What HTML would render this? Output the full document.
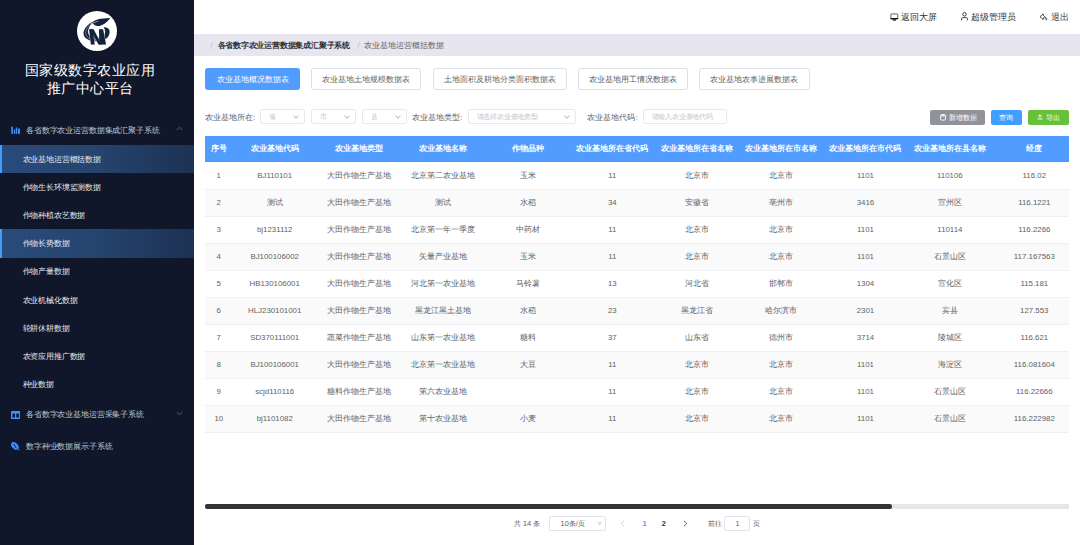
<!DOCTYPE html>
<html><head><meta charset="utf-8">
<style>
*{box-sizing:border-box;margin:0;padding:0}
html,body{width:1080px;height:545px;overflow:hidden;background:#fff;font-family:"Liberation Sans",sans-serif}
.abs{position:absolute}
#side{position:absolute;left:0;top:0;width:194px;height:545px;background:#11172a}
.t{position:absolute;white-space:nowrap;line-height:1}
.logo{position:absolute;left:77px;top:11px;width:40px;height:40px;border-radius:50%;background:#fff}
.title{position:absolute;left:0;width:180px;text-align:center;color:#fff;font-size:14px;letter-spacing:0.5px;line-height:18.7px}
.grp{position:absolute;left:0;width:194px;height:31.5px}
.grp .tx{position:absolute;left:26px;top:1.3px;line-height:31.5px;font-size:8px;color:#bfcbd9;letter-spacing:-0.15px}
.item{position:absolute;left:0;width:194px;height:28.125px}
.item .tx{position:absolute;left:22.5px;top:0.9px;line-height:28.125px;font-size:8px;color:#e6eaf0;letter-spacing:-0.15px}
.item.on{background:linear-gradient(90deg,#2a4a7b 0%,#25446f 50%,#1d3153 100%)}
.item.on:before{content:"";position:absolute;left:0;top:0;width:2px;height:100%;background:#409eff}
#head{position:absolute;left:194px;top:0;width:886px;height:34px;background:#fff}
.hd{position:absolute;top:0.3px;line-height:35px;font-size:9px;color:#303133}
#crumb{position:absolute;left:194px;top:34px;width:886px;height:22px;background:#e7e5f0}
.btn{position:absolute;top:67.5px;height:22px;border:1px solid #dcdfe6;border-radius:2.5px;background:#fff;color:#606266;font-size:8px;line-height:20px;padding-top:1.6px;text-align:center;white-space:nowrap}
.btn.pri{background:#509cff;border-color:#509cff;color:#fff}
.lbl{position:absolute;top:109.5px;line-height:15px;font-size:8px;color:#606266;white-space:nowrap}
.sel{position:absolute;top:109.4px;height:14.8px;border:1px solid #e6e9ef;border-radius:2.2px;background:#fff}
.sel .ph{position:absolute;left:8.2px;top:0;line-height:13px;font-size:7px;color:#c0c4cc;white-space:nowrap;letter-spacing:-0.2px}
.sel .ar{position:absolute;top:4px;width:4px;height:4px;border-right:0.8px solid #c0c4cc;border-bottom:0.8px solid #c0c4cc;transform:rotate(45deg)}
.mb{position:absolute;top:109.8px;height:15.5px;border-radius:2px;color:#fff;font-size:7px;line-height:15.5px;text-align:center;white-space:nowrap}
#table{position:absolute;left:205px;top:135.5px;width:864px;height:297.5px;overflow:hidden}
.row{position:absolute;left:0;width:1200px;height:27px;border-bottom:0.6px solid #eef0f4}
.row.hdr{top:0;height:26.6px;background:#509cff;border:none;box-shadow:inset 0 -0.6px 0 #3f90fb,inset 0 0.6px 0 #4a97fd}
.row.st{background:#fafafa}
.c{position:absolute;top:0;text-align:center;white-space:nowrap;font-size:7.875px;color:#606266}
.hdr .c{color:#fff;font-weight:bold;font-size:8px;line-height:26px}
.row .c{line-height:25.8px}
.pg{top:516.5px;line-height:14.5px;font-size:7.3px;color:#606266}
</style></head><body>
<div id="side">
  <div class="logo"></div>
  <svg class="abs" style="left:82px;top:16px" width="30" height="30" viewBox="0 0 545 545">
    <g fill="#13243a">
      <path d="M185,128 C225,70 330,42 515,38 C475,85 410,165 320,180 C265,190 225,175 185,128 Z"/>
      <path d="M203,100 C110,150 20,230 28,325 C40,435 200,475 340,455 C450,435 515,350 500,262 C494,225 460,205 392,198 C425,255 432,310 398,352 C358,392 248,402 168,377 C112,352 98,292 122,225 C140,180 168,145 212,114 Z"/>
    </g>
    <path d="M160,143 L298,91" stroke="#fff" stroke-width="9" fill="none"/>
    <path d="M196,118 C120,170 62,240 70,325 C80,400 170,440 280,440" stroke="#fff" stroke-width="7" fill="none"/>
    <g fill="#13243a" stroke="#fff" stroke-width="14" stroke-linejoin="miter">
      <path d="M129,242 L196,242 L229,516 L163,516 Z"/>
      <path d="M309,242 L382,242 L436,516 L316,516 Z"/>
      <path d="M136,242 L209,242 L356,516 L303,516 Z"/>
    </g>
    <g fill="#13243a">
      <path d="M129,242 L196,242 L229,516 L163,516 Z"/>
      <path d="M309,242 L382,242 L436,516 L316,516 Z"/>
      <path d="M136,242 L209,242 L356,516 L303,516 Z"/>
    </g>
  </svg>
  <div class="title" style="top:60.5px">国家级数字农业应用</div>
  <div class="title" style="top:79.2px">推广中心平台</div>
  <div class="grp" style="top:113.5px"><div class="tx">各省数字农业运营数据集成汇聚子系统</div>
    <svg class="abs" style="left:11px;top:12px" width="10" height="8" viewBox="0 0 10 8"><g fill="#3b8cff"><rect x="0.2" y="0.7" width="1.7" height="7.2"/><rect x="2.8" y="3.5" width="1.4" height="4.4"/><rect x="4.8" y="1.5" width="1.5" height="6.4"/><rect x="7" y="2.6" width="2" height="5.3"/></g></svg>
    <svg class="abs" style="left:176px;top:12.5px" width="7" height="5" viewBox="0 0 7 5"><path d="M0.8,4 L3.5,1.2 L6.2,4" fill="none" stroke="#5a6478" stroke-width="0.9"/></svg>
  </div>
  <div class="item on" style="top:145px"><div class="tx">农业基地运营概括数据</div></div>
  <div class="item" style="top:173.125px"><div class="tx">作物生长环境监测数据</div></div>
  <div class="item" style="top:201.25px"><div class="tx">作物种植农艺数据</div></div>
  <div class="item on" style="top:229.375px"><div class="tx">作物长势数据</div></div>
  <div class="item" style="top:257.5px"><div class="tx">作物产量数据</div></div>
  <div class="item" style="top:285.625px"><div class="tx">农业机械化数据</div></div>
  <div class="item" style="top:313.75px"><div class="tx">轮耕休耕数据</div></div>
  <div class="item" style="top:341.875px"><div class="tx">农资应用推广数据</div></div>
  <div class="item" style="top:370px"><div class="tx">种业数据</div></div>
  <div class="grp" style="top:398.1px"><div class="tx">各省数字农业基地运营采集子系统</div>
    <svg class="abs" style="left:10.9px;top:12.7px" width="9.4" height="8.2" viewBox="0 0 9.4 8.2"><rect x="0" y="0" width="9.4" height="8.2" rx="0.9" fill="#3d8fff"/><rect x="1.5" y="2.6" width="2.5" height="3.9" fill="#11172a"/><rect x="5.3" y="2.6" width="2.6" height="3.9" fill="#11172a"/></svg>
    <svg class="abs" style="left:176px;top:13px" width="7" height="5" viewBox="0 0 7 5"><path d="M0.8,1 L3.5,3.8 L6.2,1" fill="none" stroke="#5a6478" stroke-width="0.9"/></svg>
  </div>
  <div class="grp" style="top:429.6px"><div class="tx">数字种业数据展示子系统</div>
    <svg class="abs" style="left:11px;top:12px" width="10" height="10" viewBox="0 0 10 10"><ellipse cx="3.9" cy="3.9" rx="4.4" ry="2.9" transform="rotate(45 3.9 3.9)" fill="#3d8fff"/><path d="M2.8,1.9 L5.2,6.2" stroke="#11172a" stroke-width="0.9"/><path d="M6.6,6.6 L8.4,8.2" stroke="#3d8fff" stroke-width="1"/></svg>
  </div>
</div>
<div id="head">
  <svg class="abs" style="left:695.5px;top:12.5px" width="9" height="9" viewBox="0 0 9 9"><rect x="0.85" y="0.95" width="6.9" height="4.9" rx="0.5" fill="none" stroke="#303133" stroke-width="0.75"/><rect x="0.5" y="5" width="7.6" height="1.2" fill="#111"/><rect x="2.6" y="6.2" width="3.4" height="1.5" fill="#303133"/></svg>
  <div class="hd" style="left:707px">返回大屏</div>
  <svg class="abs" style="left:766.5px;top:12.3px" width="7" height="9" viewBox="0 0 7 9"><circle cx="3.5" cy="2.3" r="1.75" fill="none" stroke="#303133" stroke-width="0.9"/><path d="M0.6,8.4 L0.6,6.6 Q0.6,5.6 1.6,5.6 L5.4,5.6 Q6.4,5.6 6.4,6.6 L6.4,8.4" fill="none" stroke="#303133" stroke-width="0.9"/></svg>
  <div class="hd" style="left:777px">超级管理员</div>
  <svg class="abs" style="left:845px;top:12.5px" width="9" height="8" viewBox="0 0 9 8"><path d="M4.2,0.9 L1,3.8 L4.2,6.6 L4.2,5 L5.2,4.6 L7.6,6.8 L7.6,5.4 L4.8,2.6 L4.2,2.6 Z" fill="none" stroke="#303133" stroke-width="0.85" stroke-linejoin="round"/></svg>
  <div class="hd" style="left:857px">退出</div>
</div>
<div id="crumb">
  <div class="t" style="left:16.3px;top:0.6px;line-height:22px;font-size:8.6px;color:#c0c4cc">/</div>
  <div class="t" style="left:23.5px;top:0.8px;line-height:22px;font-size:8px;color:#303133;font-weight:bold;letter-spacing:-0.21px">各省数字农业运营数据集成汇聚子系统</div>
  <div class="t" style="left:163.3px;top:0.6px;line-height:22px;font-size:8.6px;color:#c0c4cc">/</div>
  <div class="t" style="left:169.75px;top:0.8px;line-height:22px;font-size:8px;color:#606266">农业基地运营概括数据</div>
</div>
<div class="btn pri" style="left:205px;width:95px">农业基地概况数据表</div>
<div class="btn" style="left:311.25px;width:110px">农业基地土地规模数据表</div>
<div class="btn" style="left:432.5px;width:134px">土地面积及耕地分类面积数据表</div>
<div class="btn" style="left:577.5px;width:110.5px">农业基地用工情况数据表</div>
<div class="btn" style="left:699.25px;width:110.25px">农业基地农事进展数据表</div>

<div class="lbl" style="left:205px">农业基地所在:</div>
<div class="sel" style="left:260.25px;width:45px"><div class="ph">省</div><div class="ar" style="left:33px"></div></div>
<div class="sel" style="left:311.25px;width:45px"><div class="ph">市</div><div class="ar" style="left:33px"></div></div>
<div class="sel" style="left:361.5px;width:45px"><div class="ph">县</div><div class="ar" style="left:33px"></div></div>
<div class="lbl" style="left:412px">农业基地类型:</div>
<div class="sel" style="left:467.5px;width:108px"><div class="ph">请选择农业基地类型</div><div class="ar" style="left:96px"></div></div>
<div class="lbl" style="left:587.25px">农业基地代码:</div>
<div class="sel" style="left:642.5px;width:84px"><div class="ph">请输入农业基地代码</div></div>
<div class="mb" style="left:930.4px;width:54.5px;background:#909399"><svg class="abs" style="left:9.6px;top:4.3px" width="6" height="6.6" viewBox="0 0 6 6.6"><rect x="0.5" y="0.5" width="5" height="5.6" rx="1.2" fill="none" stroke="#fff" stroke-width="0.9"/><rect x="1.3" y="1.2" width="3.4" height="1.3" fill="#fff"/></svg><span class="abs" style="left:18.5px;top:0">新增数据</span></div>
<div class="mb" style="left:990.7px;width:31.2px;background:#409eff">查询</div>
<div class="mb" style="left:1027.8px;width:41px;background:#67c23a"><svg class="abs" style="left:9.2px;top:4.6px" width="6" height="5.5" viewBox="0 0 6 5.5"><path d="M3,4.2 L3,0.8 M1.2,2.4 L3,0.6 L4.8,2.4 M0.3,5 L5.7,5" fill="none" stroke="#fff" stroke-width="0.85"/></svg><span class="abs" style="left:18.2px;top:0">导出</span></div>

<div id="table">
<div class="row hdr"><div class="c" style="left:0.00px;width:27.5px">序号</div><div class="c" style="left:27.50px;width:84.4px">农业基地代码</div><div class="c" style="left:111.90px;width:84.4px">农业基地类型</div><div class="c" style="left:196.30px;width:84.4px">农业基地名称</div><div class="c" style="left:280.70px;width:84.4px">作物品种</div><div class="c" style="left:365.10px;width:84.4px">农业基地所在省代码</div><div class="c" style="left:449.50px;width:84.4px">农业基地所在省名称</div><div class="c" style="left:533.90px;width:84.4px">农业基地所在市名称</div><div class="c" style="left:618.30px;width:84.4px">农业基地所在市代码</div><div class="c" style="left:702.70px;width:84.4px">农业基地所在县名称</div><div class="c" style="left:787.10px;width:84.4px">经度</div></div>
<div class="row" style="top:27.000px"><div class="c" style="left:0.00px;width:27.5px">1</div><div class="c" style="left:27.50px;width:84.4px">BJ110101</div><div class="c" style="left:111.90px;width:84.4px">大田作物生产基地</div><div class="c" style="left:196.30px;width:84.4px">北京第二农业基地</div><div class="c" style="left:280.70px;width:84.4px">玉米</div><div class="c" style="left:365.10px;width:84.4px">11</div><div class="c" style="left:449.50px;width:84.4px">北京市</div><div class="c" style="left:533.90px;width:84.4px">北京市</div><div class="c" style="left:618.30px;width:84.4px">1101</div><div class="c" style="left:702.70px;width:84.4px">110106</div><div class="c" style="left:787.10px;width:84.4px">116.02</div></div>
<div class="row st" style="top:54.000px"><div class="c" style="left:0.00px;width:27.5px">2</div><div class="c" style="left:27.50px;width:84.4px">测试</div><div class="c" style="left:111.90px;width:84.4px">大田作物生产基地</div><div class="c" style="left:196.30px;width:84.4px">测试</div><div class="c" style="left:280.70px;width:84.4px">水稻</div><div class="c" style="left:365.10px;width:84.4px">34</div><div class="c" style="left:449.50px;width:84.4px">安徽省</div><div class="c" style="left:533.90px;width:84.4px">亳州市</div><div class="c" style="left:618.30px;width:84.4px">3416</div><div class="c" style="left:702.70px;width:84.4px">宣州区</div><div class="c" style="left:787.10px;width:84.4px">116.1221</div></div>
<div class="row" style="top:81.000px"><div class="c" style="left:0.00px;width:27.5px">3</div><div class="c" style="left:27.50px;width:84.4px">bj1231112</div><div class="c" style="left:111.90px;width:84.4px">大田作物生产基地</div><div class="c" style="left:196.30px;width:84.4px">北京第一年一季度</div><div class="c" style="left:280.70px;width:84.4px">中药材</div><div class="c" style="left:365.10px;width:84.4px">11</div><div class="c" style="left:449.50px;width:84.4px">北京市</div><div class="c" style="left:533.90px;width:84.4px">北京市</div><div class="c" style="left:618.30px;width:84.4px">1101</div><div class="c" style="left:702.70px;width:84.4px">110114</div><div class="c" style="left:787.10px;width:84.4px">116.2266</div></div>
<div class="row st" style="top:108.000px"><div class="c" style="left:0.00px;width:27.5px">4</div><div class="c" style="left:27.50px;width:84.4px">BJ100106002</div><div class="c" style="left:111.90px;width:84.4px">大田作物生产基地</div><div class="c" style="left:196.30px;width:84.4px">矢量产业基地</div><div class="c" style="left:280.70px;width:84.4px">玉米</div><div class="c" style="left:365.10px;width:84.4px">11</div><div class="c" style="left:449.50px;width:84.4px">北京市</div><div class="c" style="left:533.90px;width:84.4px">北京市</div><div class="c" style="left:618.30px;width:84.4px">1101</div><div class="c" style="left:702.70px;width:84.4px">石景山区</div><div class="c" style="left:787.10px;width:84.4px">117.167563</div></div>
<div class="row" style="top:135.000px"><div class="c" style="left:0.00px;width:27.5px">5</div><div class="c" style="left:27.50px;width:84.4px">HB130106001</div><div class="c" style="left:111.90px;width:84.4px">大田作物生产基地</div><div class="c" style="left:196.30px;width:84.4px">河北第一农业基地</div><div class="c" style="left:280.70px;width:84.4px">马铃薯</div><div class="c" style="left:365.10px;width:84.4px">13</div><div class="c" style="left:449.50px;width:84.4px">河北省</div><div class="c" style="left:533.90px;width:84.4px">邯郸市</div><div class="c" style="left:618.30px;width:84.4px">1304</div><div class="c" style="left:702.70px;width:84.4px">宣化区</div><div class="c" style="left:787.10px;width:84.4px">115.181</div></div>
<div class="row st" style="top:162.000px"><div class="c" style="left:0.00px;width:27.5px">6</div><div class="c" style="left:27.50px;width:84.4px">HLJ230101001</div><div class="c" style="left:111.90px;width:84.4px">大田作物生产基地</div><div class="c" style="left:196.30px;width:84.4px">黑龙江黑土基地</div><div class="c" style="left:280.70px;width:84.4px">水稻</div><div class="c" style="left:365.10px;width:84.4px">23</div><div class="c" style="left:449.50px;width:84.4px">黑龙江省</div><div class="c" style="left:533.90px;width:84.4px">哈尔滨市</div><div class="c" style="left:618.30px;width:84.4px">2301</div><div class="c" style="left:702.70px;width:84.4px">宾县</div><div class="c" style="left:787.10px;width:84.4px">127.553</div></div>
<div class="row" style="top:189.000px"><div class="c" style="left:0.00px;width:27.5px">7</div><div class="c" style="left:27.50px;width:84.4px">SD370111001</div><div class="c" style="left:111.90px;width:84.4px">蔬菜作物生产基地</div><div class="c" style="left:196.30px;width:84.4px">山东第一农业基地</div><div class="c" style="left:280.70px;width:84.4px">糖料</div><div class="c" style="left:365.10px;width:84.4px">37</div><div class="c" style="left:449.50px;width:84.4px">山东省</div><div class="c" style="left:533.90px;width:84.4px">德州市</div><div class="c" style="left:618.30px;width:84.4px">3714</div><div class="c" style="left:702.70px;width:84.4px">陵城区</div><div class="c" style="left:787.10px;width:84.4px">116.621</div></div>
<div class="row st" style="top:216.000px"><div class="c" style="left:0.00px;width:27.5px">8</div><div class="c" style="left:27.50px;width:84.4px">BJ100106001</div><div class="c" style="left:111.90px;width:84.4px">大田作物生产基地</div><div class="c" style="left:196.30px;width:84.4px">北京第一农业基地</div><div class="c" style="left:280.70px;width:84.4px">大豆</div><div class="c" style="left:365.10px;width:84.4px">11</div><div class="c" style="left:449.50px;width:84.4px">北京市</div><div class="c" style="left:533.90px;width:84.4px">北京市</div><div class="c" style="left:618.30px;width:84.4px">1101</div><div class="c" style="left:702.70px;width:84.4px">海淀区</div><div class="c" style="left:787.10px;width:84.4px">116.081604</div></div>
<div class="row" style="top:243.000px"><div class="c" style="left:0.00px;width:27.5px">9</div><div class="c" style="left:27.50px;width:84.4px">scjd110116</div><div class="c" style="left:111.90px;width:84.4px">糖料作物生产基地</div><div class="c" style="left:196.30px;width:84.4px">第六农业基地</div><div class="c" style="left:280.70px;width:84.4px"></div><div class="c" style="left:365.10px;width:84.4px">11</div><div class="c" style="left:449.50px;width:84.4px">北京市</div><div class="c" style="left:533.90px;width:84.4px">北京市</div><div class="c" style="left:618.30px;width:84.4px">1101</div><div class="c" style="left:702.70px;width:84.4px">石景山区</div><div class="c" style="left:787.10px;width:84.4px">116.22666</div></div>
<div class="row st" style="top:270.000px"><div class="c" style="left:0.00px;width:27.5px">10</div><div class="c" style="left:27.50px;width:84.4px">bj1101082</div><div class="c" style="left:111.90px;width:84.4px">大田作物生产基地</div><div class="c" style="left:196.30px;width:84.4px">第十农业基地</div><div class="c" style="left:280.70px;width:84.4px">小麦</div><div class="c" style="left:365.10px;width:84.4px">11</div><div class="c" style="left:449.50px;width:84.4px">北京市</div><div class="c" style="left:533.90px;width:84.4px">北京市</div><div class="c" style="left:618.30px;width:84.4px">1101</div><div class="c" style="left:702.70px;width:84.4px">石景山区</div><div class="c" style="left:787.10px;width:84.4px">116.222982</div></div>
</div>
<div class="abs" style="left:205px;top:504.4px;width:864px;height:4.5px;background:#e6e6e6"></div>
<div class="abs" style="left:205px;top:504.4px;width:687px;height:4.5px;background:#333;border-radius:2.25px"></div>
<div id="pager">
  <div class="t pg" style="left:514px">共 14 条</div>
  <div class="abs" style="left:549.4px;top:516px;width:56.2px;height:14.8px;border:1px solid #e2e5eb;border-radius:2px"></div>
  <div class="t pg" style="left:560.6px">10条/页</div>
  <div class="abs" style="left:597.5px;top:520.5px;width:3.2px;height:3.2px;border-right:0.7px solid #c0c4cc;border-bottom:0.7px solid #c0c4cc;transform:rotate(45deg)"></div>
  <svg class="abs" style="left:620px;top:520px" width="5" height="7" viewBox="0 0 5 7"><path d="M4,0.8 L1.2,3.5 L4,6.2" fill="none" stroke="#c0c4cc" stroke-width="0.75"/></svg>
  <div class="t pg" style="left:642.5px;color:#409eff;font-weight:bold">1</div>
  <div class="t pg" style="left:661.8px;color:#303133;font-weight:bold">2</div>
  <svg class="abs" style="left:683px;top:520px" width="5" height="7" viewBox="0 0 5 7"><path d="M1,0.8 L3.8,3.5 L1,6.2" fill="none" stroke="#303133" stroke-width="0.75"/></svg>
  <div class="t pg" style="left:707.5px">前往</div>
  <div class="abs" style="left:724.4px;top:515.6px;width:25.9px;height:15.7px;border:1px solid #e2e5eb;border-radius:2px"></div>
  <div class="t pg" style="left:735.6px;color:#606266">1</div>
  <div class="t pg" style="left:752.5px">页</div>
</div>
</body></html>
